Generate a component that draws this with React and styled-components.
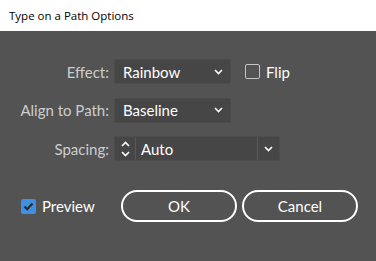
import React from "react";
import styled, { createGlobalStyle } from "styled-components";

const Global = createGlobalStyle`
  html, body { margin: 0; padding: 0; background: #535353; }
  body { width: 376px; height: 261px; overflow: hidden; }
`;

const Window = styled.div`
  width: 376px;
  height: 261px;
  display: flex;
  flex-direction: column;
  background: #535353;
  box-sizing: border-box;
`;

const TitleBar = styled.div`
  height: 31px;
  flex: none;
  background: #ffffff;
  display: flex;
  align-items: center;
  padding-left: 9px;
  font-family: "Open Sans", "Noto Sans", sans-serif;
  font-size: 11.5px;
  color: #000;
`;

const Body = styled.div`
  flex: 1;
  display: flex;
  flex-direction: column;
  padding-top: 28px;
  font-family: Lato, "Open Sans", sans-serif;
  font-size: 15px;
`;

const Form = styled.div`
  display: grid;
  grid-template-columns: 109px auto;
  column-gap: 5px;
  row-gap: 13.5px;
  align-items: center;
`;

const Label = styled.div`
  text-align: right;
  color: #cdcdcd;
  white-space: nowrap;
`;

const Line = styled.div`
  display: flex;
  align-items: center;
  height: 25px;
`;

const Select = styled.div`
  box-sizing: border-box;
  width: ${(p) => p.$w}px;
  height: 25px;
  background: #464646;
  border: 1px solid #4c4c4c;
  border-radius: 2px;
  display: flex;
  align-items: center;
  justify-content: space-between;
  padding: 0 7px 0 8px;
  color: #ffffff;
`;

const Chevron = ({ up }) => (
  <svg width="9" height="6" viewBox="0 0 9 6">
    <path
      d={up ? "M1 5 L4.5 1.5 L8 5" : "M1 1 L4.5 4.5 L8 1"}
      fill="none"
      stroke="#ffffff"
      strokeWidth="1.6"
    />
  </svg>
);

const Combo = styled.div`
  display: flex;
  height: 25px;
  box-sizing: border-box;
  border: 1px solid #4c4c4c;
  border-radius: 2px;
  background: #464646;
  color: #fff;
`;

const Stepper = styled.div`
  width: 21px;
  display: flex;
  flex-direction: column;
  align-items: center;
  justify-content: space-between;
  padding: 4px 0 3px;
  box-sizing: border-box;
  border-right: 1px solid #575757;
`;

const ComboField = styled.div`
  width: 122px;
  display: flex;
  align-items: center;
  padding-left: 5px;
  box-sizing: border-box;
  border-right: 1px solid #575757;
`;

const ComboArrow = styled.div`
  width: 21px;
  display: flex;
  align-items: center;
  justify-content: center;
`;

const Check = styled.div`
  width: 15px;
  height: 15px;
  box-sizing: border-box;
  border-radius: 2px;
  flex: none;
  ${(p) =>
    p.$on
      ? `background: #3f8fe3; display:flex; align-items:center; justify-content:center;`
      : `border: 1.5px solid #c4c4c4;`}
`;

const CheckRow = styled.label`
  display: flex;
  align-items: center;
  gap: 6px;
  color: #ffffff;
  margin-left: ${(p) => p.$ml}px;
  width: ${(p) => (p.$w ? `${p.$w}px` : "auto")};
  flex: none;
`;

const Footer = styled.div`
  display: flex;
  align-items: center;
  margin-top: 29px;
  padding-left: 21px;
`;

const Buttons = styled.div`
  display: flex;
  gap: 5px;
`;

const Button = styled.button`
  width: 116px;
  height: 32px;
  box-sizing: border-box;
  border: 2px solid #ffffff;
  border-radius: 16px;
  background: transparent;
  color: #ffffff;
  font-family: Lato, "Open Sans", sans-serif;
  font-size: 15px;
  padding: 0;
`;

export default function App() {
  return (
    <Window>
      <Global />
      <TitleBar>Type on a Path Options</TitleBar>
      <Body>
        <Form>
          <Label>Effect:</Label>
          <Line>
            <Select $w={117}>
              <span>Rainbow</span>
              <Chevron />
            </Select>
            <CheckRow $ml={14}>
              <Check />
              Flip
            </CheckRow>
          </Line>
          <Label>Align to Path:</Label>
          <Line>
            <Select $w={117}>
              <span>Baseline</span>
              <Chevron />
            </Select>
          </Line>
          <Label>Spacing:</Label>
          <Line>
            <Combo>
              <Stepper>
                <Chevron up />
                <Chevron />
              </Stepper>
              <ComboField>Auto</ComboField>
              <ComboArrow>
                <Chevron />
              </ComboArrow>
            </Combo>
          </Line>
        </Form>
        <Footer>
          <CheckRow $ml={0} $w={100}>
            <Check $on>
              <svg width="11" height="9" viewBox="0 0 11 9">
                <path d="M1.5 4.5 L4.2 7.2 L9.5 1.5" fill="none" stroke="#2b2b2b" strokeWidth="2.2" />
              </svg>
            </Check>
            Preview
          </CheckRow>
          <Buttons>
            <Button>OK</Button>
            <Button>Cancel</Button>
          </Buttons>
        </Footer>
      </Body>
    </Window>
  );
}
